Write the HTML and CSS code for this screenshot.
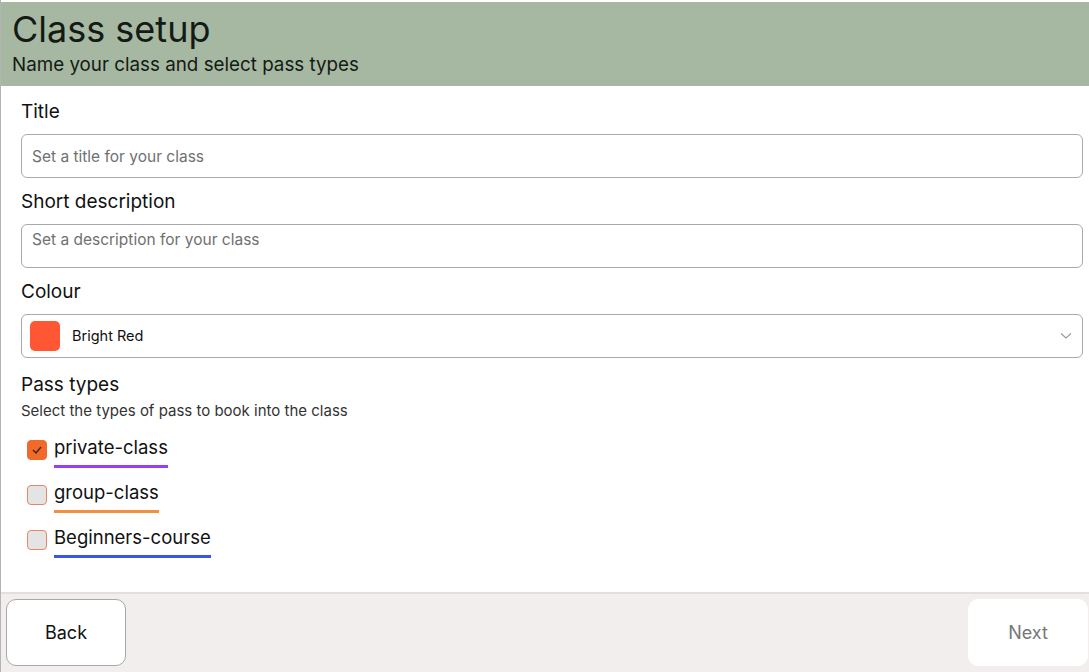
FILE: index.html
```html
<!DOCTYPE html>
<html lang="en">
<head>
    <meta charset="UTF-8">
    <meta name="viewport" content="width=device-width, initial-scale=1.0">
    <title>Class setup</title>
    <link rel="stylesheet" href="styles.css">
</head>
<body>
    <div class="page">
        <!-- Header -->
        <div class="header">
            <h1>Class setup</h1>
            <p>Name your class and select pass types</p>
        </div>

        <!-- Form -->
        <div class="form">
            <label class="field-label">Title</label>
            <div class="input">Set a title for your class</div>

            <label class="field-label">Short description</label>
            <div class="input textarea">Set a description for your class</div>

            <label class="field-label">Colour</label>
            <div class="input select">
                <span class="swatch"></span>
                <span class="select-text">Bright Red</span>
                <svg class="chevron" width="12" height="8" viewBox="0 0 12 8">
                    <path d="M1 1.5 L6 6 L11 1.5" fill="none" stroke="#9a9a9a" stroke-width="1.2"/>
                </svg>
            </div>

            <label class="field-label pass-label">Pass types</label>
            <p class="hint">Select the types of pass to book into the class</p>

            <div class="pass-list">
                <div class="pass">
                    <span class="check checked">
                        <svg width="12" height="10" viewBox="0 0 12 10">
                            <path d="M2 5 L5 8 L10 2" fill="none" stroke="#3a2418" stroke-width="1.4"/>
                        </svg>
                    </span>
                    <span class="pass-name purple">private-class</span>
                </div>
                <div class="pass">
                    <span class="check"></span>
                    <span class="pass-name orange">group-class</span>
                </div>
                <div class="pass">
                    <span class="check"></span>
                    <span class="pass-name blue">Beginners-course</span>
                </div>
            </div>
        </div>

        <!-- Footer -->
        <div class="footer">
            <button class="btn back">Back</button>
            <button class="btn next">Next</button>
        </div>
    </div>
</body>
</html>
```

FILE: styles.css
```css
* {
    margin: 0;
    padding: 0;
    box-sizing: border-box;
    font-family: Inter, "Noto Sans", sans-serif;
}

body {
    background: #fff;
    color: #111;
    height: 100vh;
    overflow: hidden;
}

.page {
    display: flex;
    flex-direction: column;
    height: 100vh;
    padding-top: 2px;
    border-left: 1px solid #b4b4b4;
}

.header {
    background: #a6b8a2;
    padding: 6px 11px 10px;
    height: 84px;
}

.header h1 {
    font-size: 36px;
    font-weight: 400;
    line-height: 42px;
    color: #141a14;
}

.header p {
    font-size: 18.8px;
    line-height: 24px;
    margin-top: 3px;
    color: #141a14;
}

.form {
    flex: 1;
    padding: 2px 6px 0 20px;
}

.field-label {
    display: block;
    font-size: 19px;
    line-height: 24px;
    margin: 12px 0 10px;
}

.input {
    height: 44px;
    border: 1px solid #aaa;
    border-radius: 6px;
    padding: 0 10px;
    font-size: 15.5px;
    color: #707070;
    display: flex;
    align-items: center;
}

.textarea {
    align-items: flex-start;
    padding-top: 5px;
}

.select {
    padding: 0 10px 0 8px;
    color: #111;
    font-size: 14.5px;
}

.swatch {
    width: 30px;
    height: 30px;
    border-radius: 5px;
    background: #ff5733;
    margin-right: 12px;
}

.select-text {
    flex: 1;
    margin-top: -2px;
}

.field-label.pass-label {
    margin-top: 15px;
}

.hint {
    font-size: 15px;
    color: #333;
    margin-top: -6px;
    line-height: 20px;
}

.pass-list {
    margin-top: 15px;
    padding-left: 6px;
}

.pass {
    display: flex;
    align-items: flex-start;
    height: 45px;
}

.check {
    width: 20px;
    height: 20px;
    margin-top: 4px;
    margin-right: 7px;
    border-radius: 4px;
    background: #e4e4e4;
    border: 1px solid #e38863;
    display: flex;
    align-items: center;
    justify-content: center;
}

.check.checked {
    background: #f26a2a;
    border-color: #f26a2a;
}

.pass-name {
    font-size: 18.5px;
    line-height: 22px;
    padding-bottom: 7px;
    border-bottom: 3px solid;
    color: #111;
}

.purple { border-color: #9a3ff0; }
.orange { border-color: #f2903f; }
.blue { border-color: #3a56e6; }

.footer {
    height: 80px;
    background: #f2eeed;
    border-top: 2px solid #e3dfde;
    display: flex;
    justify-content: space-between;
    padding: 5px 1px 6px 5px;
}

.btn {
    width: 120px;
    background: #fff;
    border: 1px solid #a8a8a8;
    border-radius: 10px;
    font-size: 18px;
    color: #111;
    font-family: Inter, sans-serif;
}

.btn.next {
    border-color: #fff;
    color: #777;
}
```
